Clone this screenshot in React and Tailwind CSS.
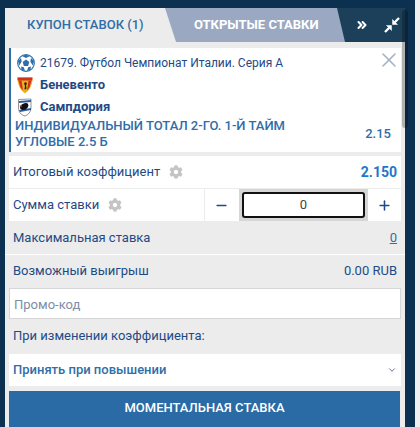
import React from 'react';
import { X, Minus, Plus, ChevronDown, ChevronsRight } from 'lucide-react';
import { FaCog } from 'react-icons/fa';

function Ball() {
  return (
    <svg width="18" height="18" viewBox="0 0 18 18" className="shrink-0">
      <circle cx="9" cy="9" r="8.300" fill="#fff" stroke="#2f6ea8" strokeWidth="1.200" />
      <path d="M9 5.600l3.300 2.400-1.200 3.900H6.900L5.700 8z" fill="#2f6ea8" />
      <path d="M9 .8L13 2 9 4 5 2zM1 7l3-3 .7 3.600L2.300 11.500zM17 7l-3-3-.7 3.600 2.400 3.900zM4.600 16l-.6-3.500 2.800 .7L8 17zM13.400 16l.6-3.500-2.800 .7L10 17z" fill="#2f6ea8" />
    </svg>
  );
}

function BeneventoLogo() {
  return (
    <svg width="16" height="17" viewBox="0 0 16 17">
      <path d="M.5 .5h15c0 7-2.500 12.500-7.500 16C3 13 .5 7.500 .5 .5z" fill="#e8b21c" />
      <path d="M.5 .5h15l-.2 3H.7z" fill="#d4301f" />
      <path d="M1.500 3.500h3l1.500 10-2.500-3zM14.500 3.500h-3L10 13.500l2.500-3z" fill="#d4301f" />
      <path d="M7 6l2-1 1 2-1 1 .5 4-2 .5L8 9z" fill="#222" />
    </svg>
  );
}

function SampdoriaLogo() {
  return (
    <svg width="16" height="19" viewBox="0 0 16 19">
      <path d="M1.500 1.500L14 1v9c0 4-3 7-6 8-4-1-6.500-4-6.500-8z" fill="#fff" stroke="#777" strokeWidth=".8" />
      <path d="M2 3l12-1v2L2 5z" fill="#2b5c9e" />
      <path d="M2 12l12-2v2L3 14z" fill="#2b5c9e" />
      <path d="M3 9c1-3 4-4 6-4s3 2 2 4-3 3-5 3-3-1-3-3z" fill="#111" />
      <path d="M2 8l3-1v2z" fill="#d4301f" />
    </svg>
  );
}

export default function App() {
  return (
    <div
      className="w-[420px] h-[427px] overflow-hidden bg-[#0c3150] flex text-[13px] text-[#1f4a85]"
      style={{ fontFamily: 'Roboto, sans-serif' }}
    >
      <div className="relative w-[400px] ml-[5px] mt-2 h-[419px] bg-[#ececec] flex flex-col shrink-0">
        {/* Tabs */}
        <div className="relative h-[34px] flex bg-[#1c3f5a] shrink-0">
          <div className="absolute inset-y-0 left-0 w-[340px] bg-[#9aa9c1] [clip-path:polygon(0_0,332px_0,100%_100%,0_100%)]"></div>
          <div className="absolute inset-y-0 left-0 w-[171px] bg-[#ececec] [clip-path:polygon(0_0,160px_0,100%_100%,0_100%)]"></div>
          <div className="relative w-[160px] h-full flex items-center pl-[22px] font-medium text-[13px] text-[#2f6ea8]">КУПОН СТАВОК (1)</div>
          <div className="relative w-[173px] h-full flex items-center pl-[29px] font-bold text-[13px] text-white">ОТКРЫТЫЕ СТАВКИ</div>
          <div className="relative flex-1 flex items-center pl-[17px] gap-[15px] text-white">
            <ChevronsRight size={14} strokeWidth={3.500} />
            <svg width="16" height="16" viewBox="0 0 16 16" fill="#fff" stroke="#fff">
              <path d="M15 1L10.500 5.500M1 15l4.500-4.500" strokeWidth="2.400" />
              <path d="M8.500 2.500v5h5zM7.500 13.500v-5h-5z" strokeWidth=".5" />
            </svg>
          </div>
        </div>

        {/* Bet card */}
        <div className="mt-[6px] ml-1 mr-1 h-[104px] bg-white border-l-2 border-[#2f6ea8] relative shrink-0 flex flex-col pl-[6px] pr-[9px] pt-[5px]">
          <div className="flex items-center gap-[5px] h-[20px] text-[12px] text-[#1f4a85]">
            <Ball />
            <span>21679. Футбол Чемпионат Италии. Серия А</span>
          </div>
          <div className="flex items-center gap-[7px] h-[22px] mt-[1px] font-bold">
            <span className="w-[16px] flex justify-center"><BeneventoLogo /></span>
            <span>Беневенто</span>
          </div>
          <div className="flex items-center gap-[7px] h-[22px] font-bold">
            <span className="w-[16px] flex justify-center"><SampdoriaLogo /></span>
            <span>Сампдория</span>
          </div>
          <div className="flex items-center justify-between -ml-[2px]">
            <div className="font-medium text-[13px] leading-[16px] text-[#2f6ea8]">
              ИНДИВИДУАЛЬНЫЙ ТОТАЛ 2-ГО. 1-Й ТАЙМ<br />УГЛОВЫЕ 2.5 Б
            </div>
            <span className="text-[#2f6ea8] font-medium mr-[1px]">2.15</span>
          </div>
          <X size={24} strokeWidth={1.600} className="absolute right-0 top-0 text-[#a5b2c8]" />
        </div>

        {/* Total */}
        <div className="mt-1 ml-1 mr-1 h-[32px] bg-white flex items-center justify-between pl-1 pr-1 shrink-0">
          <div className="flex items-center gap-[9px]">
            <span>Итоговый коэффициент</span>
            <FaCog size={14} className="text-[#c4c4c4]" />
          </div>
          <span className="text-[#1e78c8] font-bold text-[14px]">2.150</span>
        </div>

        {/* Stake */}
        <div className="mt-px ml-1 mr-1 h-[32px] bg-white flex items-stretch shrink-0">
          <div className="w-[196px] flex items-center gap-[9px] pl-1 border-r border-[#ececec]">
            <span>Сумма ставки</span>
            <FaCog size={14} className="text-[#c4c4c4]" />
          </div>
          <div className="w-[34px] flex items-center justify-center">
            <Minus size={15} strokeWidth={2.500} className="text-[#1f4a85] -ml-[2px]" />
          </div>
          <div className="w-[129px] bg-[#d6d6d6] p-[3px]">
            <div className="h-full bg-white border-2 border-[#111] rounded-[3px] flex items-center justify-center text-[#444]">0</div>
          </div>
          <div className="flex-1 flex items-center justify-center">
            <Plus size={15} strokeWidth={2.500} className="text-[#1f4a85]" />
          </div>
        </div>

        {/* Max stake */}
        <div className="h-[34px] flex items-center justify-between pl-2 pr-2 border-b border-white shrink-0">
          <span>Максимальная ставка</span>
          <span className="underline text-[#2f6ea8]">0</span>
        </div>
        <div className="h-[33px] flex items-center justify-between pl-2 pr-2 pb-px shrink-0">
          <span>Возможный выигрыш</span>
          <span>0.00 RUB</span>
        </div>

        {/* Promo */}
        <div className="ml-1 mr-[4px] h-[31px] bg-white border border-[#d6d6d6] flex items-center pl-1 pt-[2px] text-[#7d8ea8] shrink-0">Промо-код</div>

        <div className="h-[35px] flex items-center pl-2 pb-[1px] shrink-0">При изменении коэффициента:</div>

        {/* Accept select */}
        <div className="ml-1 mr-1 h-[32px] bg-white flex items-center justify-between pl-1 pr-1 font-medium text-[#2f6ea8] shrink-0">
          <span>Принять при повышении</span>
          <ChevronDown size={10} strokeWidth={2} className="text-[#44597a]" />
        </div>

        <div className="mt-[5px] ml-1 mr-[5px] flex-1 bg-[#2a6aa5] flex items-center justify-center font-medium text-white pb-[2px]">
          МОМЕНТАЛЬНАЯ СТАВКА
        </div>

        {/* Scrollbar */}
        <div className="absolute top-[2px] right-[-3px] w-[6px] h-[118px] rounded bg-black/25"></div>
      </div>
      <div className="ml-[10px] flex-1 bg-[#f0f0f0]"></div>
    </div>
  );
}
